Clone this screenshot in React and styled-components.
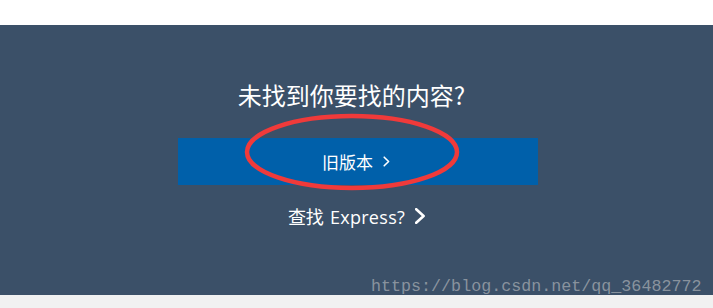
import React from 'react';
import styled, { createGlobalStyle } from 'styled-components';

const Global = createGlobalStyle`
  html, body { margin: 0; padding: 0; background: #fff; }
  body { font-family: "Noto Sans CJK SC", "Noto Sans", sans-serif; }
`;

const Page = styled.div`
  position: relative;
  width: 713px;
  height: 308px;
  overflow: hidden;
  display: flex;
  flex-direction: column;
`;

const TopBar = styled.div`
  height: 25px;
  background: #ffffff;
`;

const Band = styled.section`
  height: 270px;
  background: #3b5068;
  display: flex;
  flex-direction: column;
  align-items: center;
  padding-top: 53px;
  box-sizing: border-box;
`;

const Title = styled.h2`
  margin: 0 0 0 -10px;
  font-size: 24px;
  line-height: 34px;
  font-weight: 400;
  color: #ffffff;
`;

const ButtonWrap = styled.div`
  position: relative;
  margin-top: 26px;
  margin-left: 3px;
`;

const OldButton = styled.a`
  display: flex;
  align-items: center;
  justify-content: center;
  gap: 10px;
  width: 360px;
  height: 47px;
  background: #0060aa;
  color: #fff;
  font-size: 17px;
  text-decoration: none;
  padding-right: 4px;
  box-sizing: border-box;
`;

const Ring = styled.svg`
  position: absolute;
  left: 64px;
  top: -25px;
  pointer-events: none;
`;

const FindLink = styled.a`
  display: flex;
  align-items: center;
  gap: 10px;
  margin-top: 18px;
  color: #fff;
  font-size: 18px;
  text-decoration: none;
  margin-left: 0px;
`;

const Latin = styled.span`
  font-family: "Open Sans", "Noto Sans", sans-serif;
  font-size: 18px;
  letter-spacing: 0.3px;
  margin-left: 6px;
`;

const Footer = styled.div`
  flex: 1;
  background: #f1f1f1;
`;

const Watermark = styled.div`
  position: absolute;
  left: 371px;
  top: 277px;
  font-family: "Liberation Mono", "DejaVu Sans Mono", monospace;
  font-size: 16.7px;
  line-height: 20px;
  color: rgba(205, 205, 205, 0.55);
`;

function Chevron({ w = 7, h = 10, width = 1.8 }) {
  return (
    <svg width={w} height={h} viewBox={`0 0 ${w} ${h}`} fill="none">
      <path
        d={`M1.2 1.2 L${w - 1.4} ${h / 2} L1.2 ${h - 1.2}`}
        stroke="#fff"
        strokeWidth={width}
        strokeLinecap="round"
        strokeLinejoin="round"
      />
    </svg>
  );
}

export default function App() {
  return (
    <>
      <Global />
      <Page>
        <TopBar />
        <Band>
          <Title>未找到你要找的内容?</Title>
          <ButtonWrap>
            <OldButton href="#">
              <span>旧版本</span>
              <Chevron w={7} h={11} width={1.6} />
            </OldButton>
            <Ring width="220" height="80" viewBox="0 0 220 80">
              <ellipse cx="110" cy="39" rx="105" ry="36" fill="none" stroke="#f03a3a" strokeWidth="4.5" />
            </Ring>
          </ButtonWrap>
          <FindLink href="#">
            <span>查找<Latin>Express?</Latin></span>
            <Chevron w={10} h={16} width={2.6} />
          </FindLink>
        </Band>
        <Footer />
        <Watermark>https://blog.csdn.net/qq_36482772</Watermark>
      </Page>
    </>
  );
}
